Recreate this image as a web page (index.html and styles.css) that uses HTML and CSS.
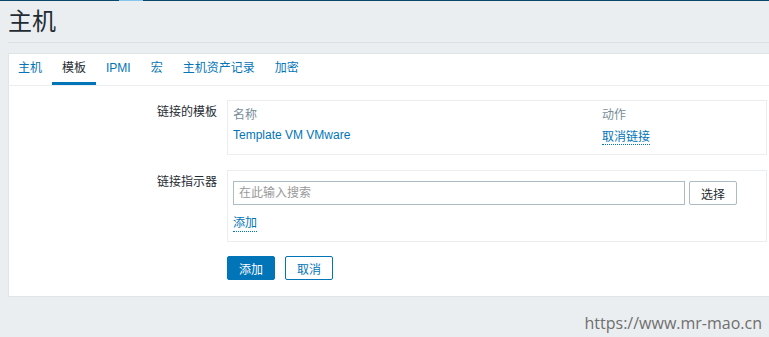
FILE: index.html
```html
<!DOCTYPE html>
<html lang="zh-CN">
<head>
    <meta charset="utf-8">
    <title>主机</title>
    <link rel="stylesheet" href="styles.css">
</head>
<body>
<div class="topbar"><span class="topbar-mark"></span></div>
<header class="page-header"><h1>主机</h1></header>
<main class="panel">
    <ul class="tabs">
        <li><a href="#">主机</a></li>
        <li class="active"><a href="#">模板</a></li>
        <li><a href="#">IPMI</a></li>
        <li><a href="#">宏</a></li>
        <li><a href="#">主机资产记录</a></li>
        <li><a href="#">加密</a></li>
    </ul>
    <form class="form">
        <div class="form-row">
            <label class="form-label">链接的模板</label>
            <div class="form-box">
                <table class="linked-table">
                    <tr>
                        <th>名称</th>
                        <th class="col-action">动作</th>
                    </tr>
                    <tr>
                        <td><a href="#" class="link">Template VM VMware</a></td>
                        <td class="col-action"><a href="#" class="link-action">取消链接</a></td>
                    </tr>
                </table>
            </div>
        </div>
        <div class="form-row form-row-last">
            <label class="form-label" for="template-search">链接指示器</label>
            <div class="form-box form-box-search">
                <div class="search-row">
                    <input type="text" id="template-search" placeholder="在此输入搜索">
                    <button type="button" class="btn-alt">选择</button>
                </div>
                <a href="#" class="link-action add-link">添加</a>
            </div>
        </div>
        <div class="form-actions">
            <button type="button" class="btn-primary">添加</button>
            <button type="button" class="btn-secondary">取消</button>
        </div>
    </form>
</main>
<div class="watermark">https://www.mr-mao.cn</div>
</body>
</html>
```

FILE: styles.css
```css
body {
    margin: 0;
    background-color: #ebeef0;
    font-family: 'Liberation Sans', 'Noto Sans CJK SC', sans-serif;
    font-size: 12px;
    color: #1f2c33;
    overflow: hidden;
}
.topbar {
    height: 1px;
    background-color: #0a466a;
}
.topbar-mark {
    display: block;
    width: 24px;
    height: 1px;
    margin-left: 119px;
    background-color: #86c7ee;
}
.page-header {
    height: 41px;
    margin-left: 8px;
    border-bottom: 1px solid #dde1e5;
    display: flex;
    align-items: center;
}
.page-header h1 {
    margin: 0;
    font-size: 24px;
    font-weight: normal;
    line-height: 30px;
    color: #1f2c33;
}
.panel {
    display: block;
    margin: 10px 0 0 8px;
    background-color: #fff;
    border: 1px solid #dfe4e7;
    border-right: none;
}
.tabs {
    display: flex;
    margin: 0 0 0 -1px;
    padding: 0;
    list-style: none;
    border-bottom: 1px solid #ebeef0;
}
.tabs li a {
    display: block;
    padding: 0 10px;
    line-height: 28px;
    border-bottom: 3px solid transparent;
    color: #0275b8;
    text-decoration: none;
}
.tabs li.active a {
    color: #1f2c33;
    border-bottom-color: #0275b8;
}
.form {
    padding: 14px 2px 16px 0;
}
.form-row {
    display: grid;
    grid-template-columns: 208px 1fr;
    column-gap: 10px;
    margin-bottom: 15px;
}
.form-row-last {
    margin-bottom: 14px;
}
.form-label {
    text-align: right;
    line-height: 24px;
}
.form-box {
    border: 1px solid #ebeef0;
    padding: 1px 5px 8px;
}
.linked-table {
    width: 100%;
    border-collapse: collapse;
}
.linked-table th,
.linked-table td {
    height: 22px;
    padding: 0;
    text-align: left;
    font-weight: normal;
}
.linked-table th {
    color: #768d99;
}
.linked-table .col-action {
    width: 159px;
}
.link {
    color: #0275b8;
    text-decoration: none;
}
.link-action {
    color: #0275b8;
    text-decoration: none;
    border-bottom: 1px dotted #0275b8;
}
.form-box-search {
    padding: 10px 5px 9px;
}
.search-row {
    display: flex;
    gap: 4px;
}
.search-row input {
    width: 452px;
    height: 24px;
    box-sizing: border-box;
    margin: 0;
    padding: 0 5px;
    border: 1px solid #acbbc4;
    border-radius: 0;
    font-family: inherit;
    font-size: 12px;
    color: #1f2c33;
}
.search-row input::placeholder {
    color: #999;
}
.btn-alt {
    height: 24px;
    width: 48px;
    margin: 0;
    padding: 0;
    background-color: #fff;
    border: 1px solid #acbbc4;
    border-radius: 2px;
    font-family: inherit;
    font-size: 12px;
    color: #1f2c33;
}
.add-link {
    display: inline-block;
    margin-top: 10px;
    line-height: 16px;
}
.form-actions {
    display: flex;
    gap: 10px;
    padding-left: 218px;
}
.btn-primary,
.btn-secondary {
    height: 24px;
    width: 48px;
    margin: 0;
    padding: 0;
    border: 1px solid #0275b8;
    border-radius: 2px;
    font-family: inherit;
    font-size: 12px;
}
.btn-primary {
    background-color: #0275b8;
    color: #fff;
}
.btn-secondary {
    background-color: #fff;
    color: #0275b8;
}
.watermark {
    position: absolute;
    right: 7px;
    top: 312px;
    font-family: 'Open Sans', sans-serif;
    font-size: 16px;
    color: #6f6f6f;
}
```
